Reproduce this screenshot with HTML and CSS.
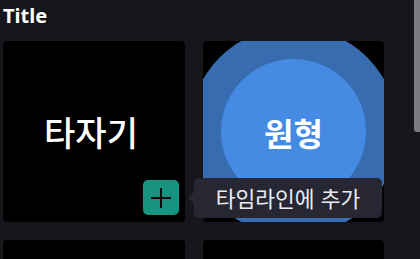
FILE: index.html
```html
<!DOCTYPE html>
<html lang="ko">
<head>
<meta charset="utf-8">
<link rel="stylesheet" href="styles.css">
</head>
<body>
<div class="page">
  <h1 class="title">Title</h1>
  <div class="grid">
    <div class="card">
      <span class="label label-plain">타자기</span>
      <button class="add-btn" aria-label="타임라인에 추가">
        <svg width="22" height="22" viewBox="0 0 22 22"><path d="M11 1V21M1 11H21" stroke="#0b0b0b" stroke-width="2" fill="none"/></svg>
      </button>
      <div class="tooltip">타임라인에 추가</div>
    </div>
    <div class="card card-circle">
      <div class="ring"></div>
      <div class="circle"><span class="label">원형</span></div>
    </div>
    <div class="card"></div>
    <div class="card"></div>
  </div>
</div>
<div class="scrollbar"></div>
</body>
</html>
```
FILE: styles.css
```css
html, body {
  margin: 0;
  padding: 0;
  background: #16161d;
  overflow: hidden;
  height: 259px;
}
body {
  font-family: "Noto Sans CJK KR", "Noto Sans", sans-serif;
  color: #fff;
}
.page {
  padding: 0 0 0 3px;
}
.title {
  margin: 0;
  height: 41px;
  font-family: "Noto Sans", "Noto Sans CJK KR", sans-serif;
  font-size: 20px;
  font-weight: 700;
  line-height: 32px;
  color: #fff;
}
.grid {
  display: grid;
  grid-template-columns: 182px 181px;
  grid-auto-rows: 181px;
  gap: 18px;
}
.card {
  position: relative;
  background: #000;
  border-radius: 4px;
  display: flex;
  align-items: center;
  justify-content: center;
}
.label {
  font-size: 32px;
  font-weight: 700;
  color: #fff;
  line-height: 1;
  position: relative;
}
.label-plain {
  font-size: 34px;
  font-weight: 500;
  left: -3px;
}
.card-circle {
  overflow: hidden;
}
.ring {
  position: absolute;
  width: 209px;
  height: 209px;
  left: 50%;
  top: 50%;
  margin: -104.5px 0 0 -104.5px;
  border-radius: 50%;
  background: #386cb1;
}
.circle {
  position: relative;
  width: 145px;
  height: 145px;
  border-radius: 50%;
  background: #458ae3;
  display: flex;
  align-items: center;
  justify-content: center;
}
.add-btn {
  position: absolute;
  right: 6px;
  bottom: 7px;
  width: 36px;
  height: 35px;
  border: 0;
  padding: 0;
  border-radius: 5px;
  background: #17937f;
  display: flex;
  align-items: center;
  justify-content: center;
}
.tooltip {
  position: absolute;
  left: 191px;
  top: 137px;
  width: 188px;
  height: 40px;
  box-sizing: border-box;
  border-radius: 5px;
  background: #272733;
  color: #ececef;
  font-size: 21.5px;
  line-height: 40px;
  text-align: center;
  white-space: nowrap;
  z-index: 2;
}
.tooltip::before {
  content: "";
  position: absolute;
  left: -6px;
  top: 14px;
  border-style: solid;
  border-width: 6px 6px 6px 0;
  border-color: transparent #272733 transparent transparent;
}
.scrollbar {
  position: absolute;
  top: 0;
  right: 0;
  width: 6px;
  height: 132px;
  background: #7c7c80;
  border-radius: 0 0 0 3px;
}
```
